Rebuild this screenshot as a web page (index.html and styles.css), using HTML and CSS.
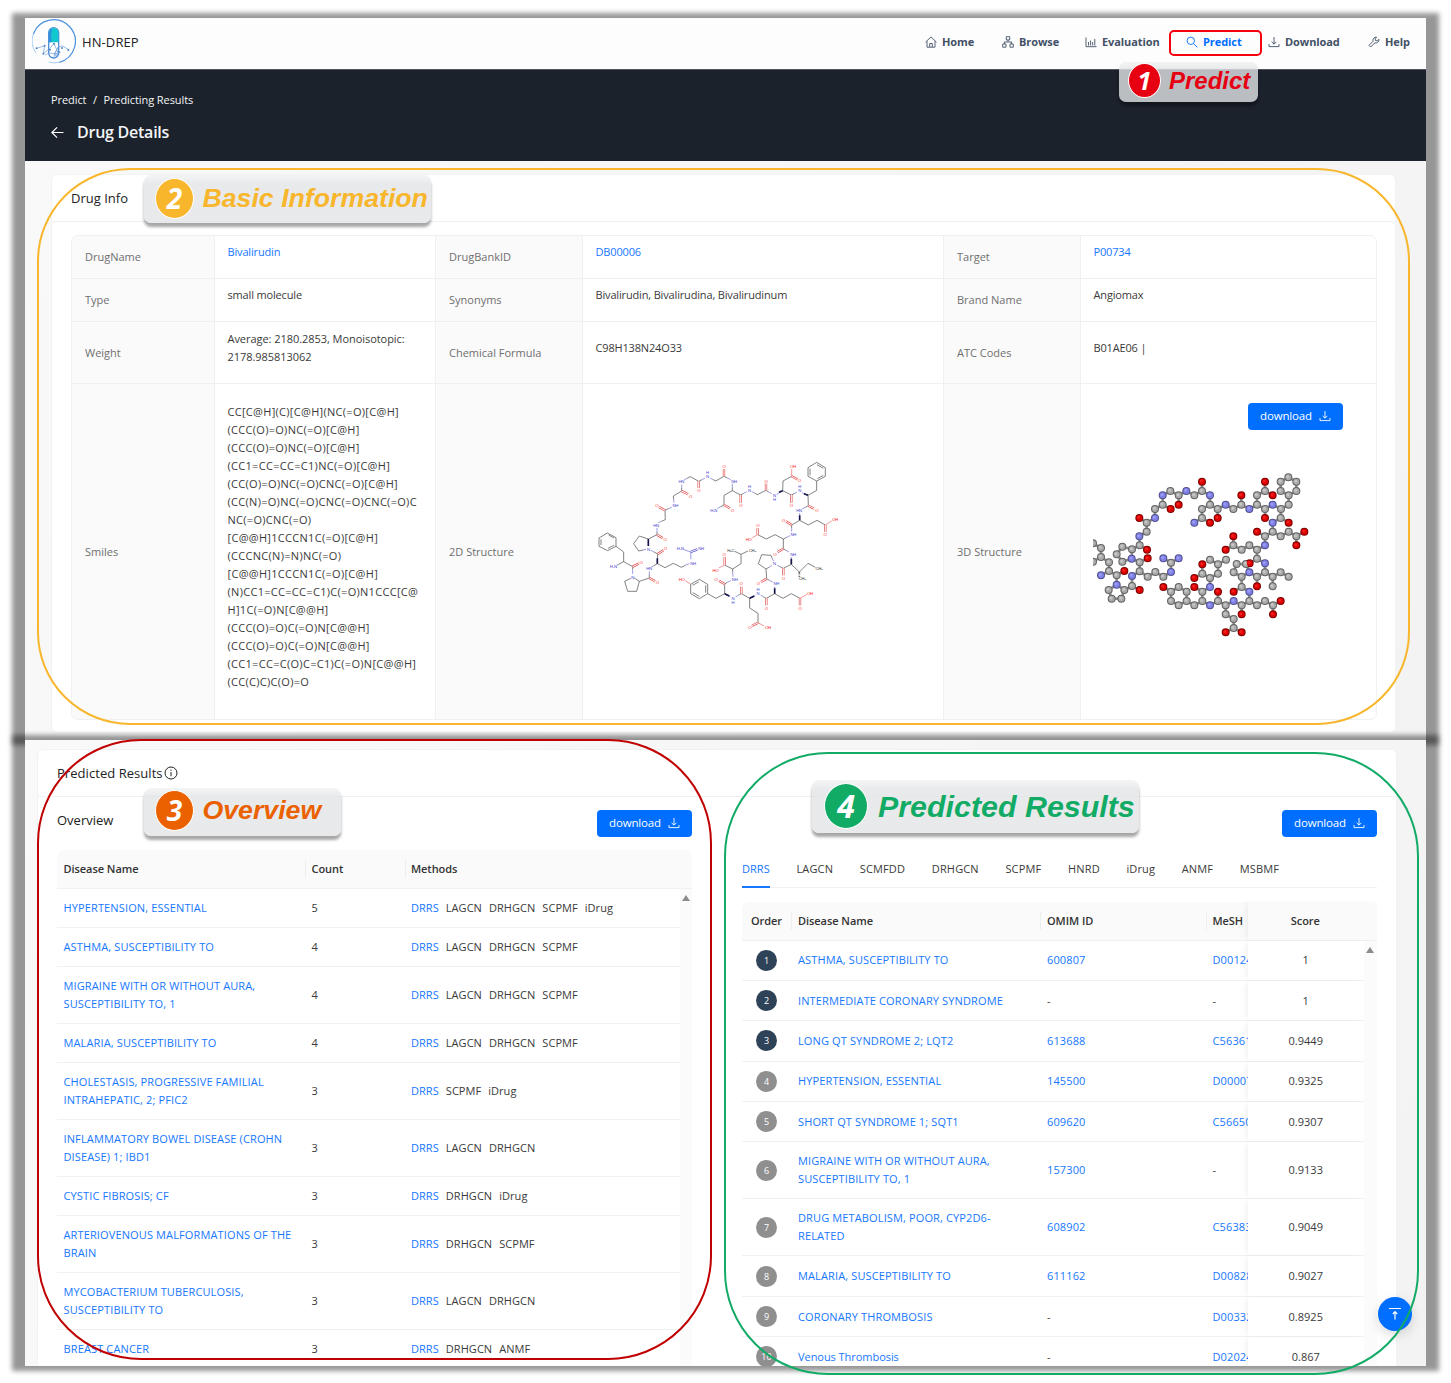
FILE: index.html
```html
<!DOCTYPE html>
<html lang="en">
<head>
<meta charset="utf-8">
<title>HN-DREP - Drug Details</title>
<link rel="stylesheet" href="styles.css">
</head>
<body>
<svg class="defs" width="0" height="0">
  <symbol id="i-download" viewBox="0 0 12 12"><path d="M6 1v7M3.600 5.800 6 8.200l2.400-2.400M1 8v2.600h10V8"/></symbol>
</svg>
<main class="figure">
  <section class="panel panel-top">
    <header class="topbar">
      <svg class="logo" viewBox="0 0 132 138">
        <path d="M4 48A65 65 0 1 1 82 133" fill="none" stroke="#4a90dc" stroke-width="3.500"/>
        <path d="M12 106A65 65 0 0 1 4 48M82 133A65 65 0 0 1 50 132" fill="none" stroke="#a9cdf3" stroke-width="3"/>
        <rect x="50" y="29" width="30" height="91" rx="15" fill="#fff" stroke="#4c8fd8" stroke-width="4"/>
        <path d="M51 73V44a14 14 0 0 1 28 0v29z" fill="#12c8cf"/>
        <path d="M51 73V44a14 14 0 0 1 10-13q-6 20-2 42z" fill="#2a94de"/>
        <path d="M14 91l24-8-4 24 18-14 14-16 14 32-28-4-12 6M80 109l-14 6 10-24 14-8 20 12M80 85l-14 24 20-6" fill="none" stroke="#6a9cd4" stroke-width="2"/>
        <path d="M14 91h0M38 83h0M34 107h0M66 77h0M90 90h0M109 96h0M80 101h0M54 95h0" class="dots"/>
      </svg>
      <span class="brand">HN-DREP</span>
      <nav class="nav">
        <a class="n1"><svg class="ic" viewBox="0 0 12 12"><path d="M.5 6.200 6 .9l5.500 5.300M2 5.200v6h8v-6M4.700 11V7.500h2.600V11"/></svg>Home</a>
        <a class="n2"><svg class="ic" viewBox="0 0 12 12"><path d="M4.300.7h3.400v3.200H4.300zM.7 8h3.300v3.200H.7zM8 8h3.300v3.200H8zM6 4v2M2.400 8V6h7.200v2"/></svg>Browse</a>
        <a class="n3"><svg class="ic" viewBox="0 0 12 12"><path d="M1 1.500v9.200h10.500M3.500 9.500V6M5.600 9.500V4.500M7.700 9.500V6M9.800 9.500V3"/></svg>Evaluation</a>
        <a class="n4 on"><svg class="ic" viewBox="0 0 12 12"><circle cx="4.800" cy="4.800" r="3.700"/><path d="m7.600 7.600 3.700 3.700"/></svg>Predict</a>
        <a class="n5"><svg class="ic"><use href="#i-download"/></svg>Download</a>
        <a class="n6"><svg class="ic" viewBox="0 0 12 12"><path d="M1 9.300 5 5.300C4.500 3 6.200.9 8.600 1.100L7.200 2.700l.3 1.800 1.800.3L11 3.300C11.200 5.700 9 7.500 6.700 7L2.700 11z"/></svg>Help</a>
      </nav>
    </header>
    <div class="hero">
      <div class="crumbs">Predict<i>/</i>Predicting Results</div>
      <h1><svg class="back" viewBox="0 0 12 12"><path d="M11.500 6H1M5.600 1.200.8 6l4.800 4.800"/></svg><span>Drug Details</span></h1>
    </div>
    <div class="card info">
      <h2>Drug Info</h2>
      <div class="desc">
        <div class="k">DrugName</div><div class="v link">Bivalirudin</div><div class="k">DrugBankID</div><div class="v link">DB00006</div><div class="k">Target</div><div class="v link">P00734</div>
        <div class="k">Type</div><div class="v">small molecule</div><div class="k">Synonyms</div><div class="v">Bivalirudin, Bivalirudina, Bivalirudinum</div><div class="k">Brand Name</div><div class="v">Angiomax</div>
        <div class="k">Weight</div><div class="v weight">Average: 2180.2853, Monoisotopic:<br>2178.985813062</div><div class="k">Chemical Formula</div><div class="v">C98H138N24O33</div><div class="k">ATC Codes</div><div class="v">B01AE06 |</div>
        <div class="k last">Smiles</div>
        <div class="v last smiles">CC[C@H](C)[C@H](NC(=O)[C@H]<br>(CCC(O)=O)NC(=O)[C@H]<br>(CCC(O)=O)NC(=O)[C@H]<br>(CC1=CC=CC=C1)NC(=O)[C@H]<br>(CC(O)=O)NC(=O)CNC(=O)[C@H]<br>(CC(N)=O)NC(=O)CNC(=O)CNC(=O)C<br>NC(=O)CNC(=O)<br>[C@@H]1CCCN1C(=O)[C@H]<br>(CCCNC(N)=N)NC(=O)<br>[C@@H]1CCCN1C(=O)[C@H]<br>(N)CC1=CC=CC=C1)C(=O)N1CCC[C@<br>H]1C(=O)N[C@@H]<br>(CCC(O)=O)C(=O)N[C@@H]<br>(CCC(O)=O)C(=O)N[C@@H]<br>(CC1=CC=C(O)C=C1)C(=O)N[C@@H]<br>(CC(C)C)C(O)=O</div>
        <div class="k last">2D Structure</div>
        <div class="v last">
          <svg class="mol2d" viewBox="18 0 765 579">
            <path class="b" d="M52 249 78 263V289L53 302 27 289V264ZM56 255 72 264M72 286 54 295M33 285V268M78 289 101 306V335L84 344M101 335 128 350V358M136 386 148 394 140 424H113L104 394 120 386M148 394 178 384V374M190 348 202 341 225 353 250 340 274 352 286 346M202 341 203 312 192 306M175 267 148 258 131 281 146 303 160 300M175 267 201 254V246M214 214 226 209 225 181 235 176M251 148 250 138 275 123V114M291 85 301 80 326 94 336 89M368 88 377 93 402 79 412 84M427 112V122L402 136V165L392 170M427 122 452 135 461 130M494 129 502 134 528 121 536 126M568 128 578 122 579 93 605 79M578 122 604 135 612 131M644 132 654 136 680 121V93L654 79V53L680 37 706 53V79L680 93M660 76V56M681 44 700 55M700 76 682 86M654 136 655 167 646 172M629 200V211L655 225 681 211 706 225M629 211 605 225V235M590 262 580 267 555 254 529 267 503 254M580 267V296L588 301M604 332V343L580 355 570 350M547 326 543 316 515 314 505 341 528 357 537 352M604 343 628 366 654 340 676 352M528 357 530 386 538 391M554 421V431L579 445 604 431 630 445M554 431 529 445 520 440M488 441 479 445 454 431 445 436M479 445V474L504 490V518M412 436 404 431 378 445 353 431V403L328 388 302 403V431L328 446 353 431M347 428V406M327 395 308 406M308 428 328 439M404 431V402L412 397M428 368V357L404 345M428 357 453 341V313L434 304M453 313 474 303"/>
            <path class="b dash" d="M628 366V382"/>
            <path class="n" d="M84 344 80 346M128 358V372M136 386 132 384M120 386 124 384M178 374V364M190 348 184 351M286 346 298 341M303 328 302 306 282 299M192 306 183 301M160 300 168 298M175 288V278M201 246V234M214 214 205 218M235 176 245 172M252 158 251 148M275 114V104M291 85 282 90M336 89 345 84M368 88 360 84M412 84 422 89M427 112V101M392 170 382 175M461 130 470 125M494 129 486 125M536 126 545 131M568 128 560 133M612 131 621 127M644 132 636 128M646 172 637 176M629 200V189M605 235V245M590 262 600 257M588 301 597 306M604 332V321M570 350 561 346M537 352 546 346M547 326 551 334M538 391 548 396M554 421V410M520 440 512 436M488 441 496 436M445 436 437 440M412 436 421 440M412 397 422 392M429 380 428 368"/>
            <path class="o" d="M605 79V57M706 225 725 213M503 254 487 263M630 445 650 434M504 518 522 528M302 403 286 392M404 345 386 354"/>
            <path class="dn" d="M302 306 322 298"/>
            <path class="do" d="M128 350 146 341M178 384 195 394M203 312 220 301M201 254 218 264M225 181 207 171M275 123 294 133M326 94V113M402 79V57M402 165 420 175M452 135V158M528 121V101M605 79 622 88M604 135V158M655 167 672 176M706 225V245M605 225 588 214M503 254V235M580 296 563 306M580 355V376M530 386 513 396M630 445V466M529 445V466M454 431V410M504 518 486 528M404 402 387 392M404 345V322"/>
            <path class="gap" d="M302 306 322 298M128 350 146 341M178 384 195 394M203 312 220 301M201 254 218 264M225 181 207 171M275 123 294 133M326 94V113M402 79V57M402 165 420 175M452 135V158M528 121V101M605 79 622 88M604 135V158M655 167 672 176M706 225V245M605 225 588 214M503 254V235M580 296 563 306M580 355V376M530 386 513 396M630 445V466M529 445V466M454 431V410M504 518 486 528M404 402 387 392M404 345V322"/>
            <path class="w" d="M175 267V288M202 341V325M578 122 567 127M654 136 642 131M629 211V196M604 343V326M554 431V415M404 431 418 438M479 445 493 438"/>
            <g class="tn"><text x="70" y="354">H₂N</text><text x="128" y="386">N</text><text x="177" y="360">HN</text><text x="309" y="344">NH</text><text x="271" y="301">H₂N</text><text x="333" y="301">NH</text><text x="175" y="302">N</text><text x="198" y="230">HN</text><text x="256" y="172">NH</text><text x="274" y="99">HN</text><text x="352" y="84">N</text><text x="352" y="71">H</text><text x="432" y="99">NH</text><text x="371" y="186">H₂N</text><text x="478" y="127">N</text><text x="478" y="115">H</text><text x="553" y="142">N</text><text x="553" y="154">H</text><text x="629" y="127">N</text><text x="629" y="115">H</text><text x="627" y="186">HN</text><text x="610" y="259">NH</text><text x="609" y="317">NH</text><text x="553" y="346">N</text><text x="559" y="406">NH</text><text x="504" y="436">N</text><text x="504" y="424">H</text><text x="429" y="450">N</text><text x="429" y="462">H</text><text x="434" y="392">NH</text></g>
            <g class="to"><text x="153" y="343">O</text><text x="202" y="402">O</text><text x="226" y="301">O</text><text x="225" y="273">O</text><text x="200" y="172">O</text><text x="301" y="143">O</text><text x="326" y="127">O</text><text x="402" y="53">O</text><text x="427" y="186">O</text><text x="452" y="172">O</text><text x="528" y="99">O</text><text x="609" y="53">OH</text><text x="628" y="97">O</text><text x="604" y="172">O</text><text x="680" y="186">O</text><text x="735" y="214">OH</text><text x="705" y="259">O</text><text x="580" y="215">O</text><text x="503" y="230">O</text><text x="476" y="273">HO</text><text x="554" y="317">O</text><text x="580" y="391">O</text><text x="505" y="406">O</text><text x="660" y="436">OH</text><text x="630" y="480">O</text><text x="529" y="480">O</text><text x="453" y="406">O</text><text x="479" y="538">O</text><text x="534" y="538">OH</text><text x="275" y="393">HO</text><text x="378" y="393">O</text><text x="402" y="319">O</text><text x="376" y="365">HO</text></g>
            <g class="tc"><text x="422" y="305">H₃C</text><text x="487" y="305">CH₃</text><text x="687" y="359">CH₃</text><text x="637" y="391">CH₃</text></g>
          </svg>
        </div>
        <div class="k last">3D Structure</div>
        <div class="v last three">
          <div class="btn">download<svg><use href="#i-download"/></svg></div>
          <svg class="mol3d" viewBox="39 240 660 504">
            <path class="sticks" d="M39 457 63 471V498L39 512M63 498 87 514V540L63 553M87 540 110 553 133 540M110 553V581L86 597 95 623H124L133 597 110 581M133 597 156 585 179 597M156 585V555L179 541 203 557 226 543 250 557 273 543V515L250 502M273 515 296 502M179 541V514L203 502M179 514 155 503 127 512 110 490 127 467 156 475 155 503M156 475 179 463 201 476M179 463 178 436 200 422V395L178 381M200 395 225 381V354L248 341 272 354M248 341V313L271 300 296 313V341M296 313 319 300 343 313 366 300V272M366 300 390 313V341L366 354V381L343 395M366 381 390 395M390 341 413 354V381M413 354 437 341 460 354 484 341V313M484 341 508 354 531 341V313L555 300V272M555 300 578 313M531 341 555 354V381M555 354 578 341 603 354 626 341V313L602 300V272L625 259 649 272V300L626 313M603 354 602 381 626 395M602 381 578 395V422L602 436 626 422 649 436 673 422M649 436V463M578 422 555 436 531 422M555 436V463L531 476 508 463 485 476 460 463V436M460 463 437 476M531 476V503L509 517M531 503 555 517V544L578 557 602 544 626 557M578 557V586M555 544 531 557V586M531 557 508 544 485 557 461 544 470 519H498L508 544M485 557V588L461 602M485 588 508 602V630L531 643 555 630 579 643 602 630M579 643V670M508 630 485 643V670M485 643 461 630 437 643V670L461 684V711L437 724M461 711 485 724M437 643 414 630V602M414 630 390 643 367 630 343 643 320 630V602L296 588 273 602 250 588M273 602V630L296 643 320 630M367 630V602L343 588M367 602 390 588V561L367 548V520M367 548 343 561M390 561 414 548V520L390 506M414 520 438 506"/>
            <defs>
              <path id="ac" d="M39 457h0M63 471h0M63 498h0M39 512h0M87 514h0M87 540h0M110 553h0M86 597h0M95 623h0M124 623h0M133 597h0M156 585h0M179 541h0M203 557h0M226 543h0M250 557h0M273 515h0M179 514h0M127 512h0M110 490h0M127 467h0M156 475h0M179 463h0M200 422h0M200 395h0M225 354h0M248 341h0M271 300h0M296 313h0M343 313h0M366 300h0M390 341h0M366 354h0M366 381h0M413 354h0M460 354h0M484 341h0M531 341h0M531 313h0M555 300h0M555 354h0M603 354h0M626 341h0M626 313h0M602 300h0M602 272h0M625 259h0M649 272h0M649 300h0M602 381h0M578 422h0M602 436h0M626 422h0M649 436h0M555 436h0M531 476h0M508 463h0M485 476h0M460 463h0M531 503h0M555 544h0M578 557h0M602 544h0M626 557h0M578 586h0M531 557h0M485 557h0M461 544h0M470 519h0M498 519h0M485 588h0M508 630h0M531 643h0M555 630h0M579 643h0M485 643h0M437 643h0M437 670h0M461 684h0M461 711h0M414 630h0M367 630h0M343 643h0M320 630h0M320 602h0M296 588h0M273 602h0M273 630h0M296 643h0M367 602h0M390 561h0M367 548h0M414 548h0M414 520h0M390 506h0M438 506h0"/>
              <path id="an" d="M63 553h0M110 581h0M156 555h0M273 543h0M250 502h0M296 502h0M155 503h0M178 436h0M225 381h0M248 313h0M319 300h0M390 313h0M343 395h0M437 341h0M508 354h0M578 341h0M578 395h0M555 463h0M555 517h0M508 544h0M508 602h0M461 630h0M390 643h0M390 588h0"/>
              <path id="ao" d="M133 540h0M179 597h0M203 502h0M201 476h0M178 381h0M272 354h0M296 341h0M366 272h0M390 395h0M413 381h0M484 313h0M555 272h0M578 313h0M555 381h0M626 395h0M673 422h0M649 463h0M531 422h0M460 436h0M437 476h0M509 517h0M531 586h0M461 602h0M602 630h0M579 670h0M485 670h0M437 724h0M485 724h0M414 602h0M250 588h0M343 588h0M367 520h0M343 561h0"/>
            </defs>
            <g class="rim"><use href="#ac" stroke="#626262"/><use href="#ao" stroke="#7c0000"/><use href="#an" stroke="#505090"/></g>
            <g class="ball"><use href="#ac" stroke="#a9a9a9"/><use href="#ao" stroke="#dc0000"/><use href="#an" stroke="#8080e4"/></g>
            <g class="shine"><use href="#ac" stroke="#c6c6c6"/><use href="#ao" stroke="#f02020"/><use href="#an" stroke="#9a9af8"/></g>
          </svg>
        </div>
      </div>
    </div>
  </section>

  <section class="panel panel-bottom">
    <div class="card results">
      <h2>Predicted Results <svg class="info-ic" viewBox="0 0 14 14"><circle cx="7" cy="7" r="6"/><path d="M7 6v4.200M7 3.600v1.200"/></svg></h2>
      <div class="cols">
        <div class="overview">
          <div class="bar"><h3>Overview</h3><div class="btn">download<svg><use href="#i-download"/></svg></div></div>
          <div class="tbl">
            <div class="row head"><span>Disease Name</span><span>Count</span><span>Methods</span></div>
            <div class="body">
              <div class="row"><span class="link">HYPERTENSION, ESSENTIAL</span><span>5</span><span class="m"><b>DRRS</b><i>LAGCN</i><i>DRHGCN</i><i>SCPMF</i><i>iDrug</i></span></div>
              <div class="row"><span class="link">ASTHMA, SUSCEPTIBILITY TO</span><span>4</span><span class="m"><b>DRRS</b><i>LAGCN</i><i>DRHGCN</i><i>SCPMF</i></span></div>
              <div class="row two"><span class="link">MIGRAINE WITH OR WITHOUT AURA,<br>SUSCEPTIBILITY TO, 1</span><span>4</span><span class="m"><b>DRRS</b><i>LAGCN</i><i>DRHGCN</i><i>SCPMF</i></span></div>
              <div class="row"><span class="link">MALARIA, SUSCEPTIBILITY TO</span><span>4</span><span class="m"><b>DRRS</b><i>LAGCN</i><i>DRHGCN</i><i>SCPMF</i></span></div>
              <div class="row two"><span class="link">CHOLESTASIS, PROGRESSIVE FAMILIAL<br>INTRAHEPATIC, 2; PFIC2</span><span>3</span><span class="m"><b>DRRS</b><i>SCPMF</i><i>iDrug</i></span></div>
              <div class="row two"><span class="link">INFLAMMATORY BOWEL DISEASE (CROHN<br>DISEASE) 1; IBD1</span><span>3</span><span class="m"><b>DRRS</b><i>LAGCN</i><i>DRHGCN</i></span></div>
              <div class="row"><span class="link">CYSTIC FIBROSIS; CF</span><span>3</span><span class="m"><b>DRRS</b><i>DRHGCN</i><i>iDrug</i></span></div>
              <div class="row two"><span class="link">ARTERIOVENOUS MALFORMATIONS OF THE<br>BRAIN</span><span>3</span><span class="m"><b>DRRS</b><i>DRHGCN</i><i>SCPMF</i></span></div>
              <div class="row two"><span class="link">MYCOBACTERIUM TUBERCULOSIS,<br>SUSCEPTIBILITY TO</span><span>3</span><span class="m"><b>DRRS</b><i>LAGCN</i><i>DRHGCN</i></span></div>
              <div class="row"><span class="link">BREAST CANCER</span><span>3</span><span class="m"><b>DRRS</b><i>DRHGCN</i><i>ANMF</i></span></div>
            </div>
          </div>
        </div>
        <div class="predicted">
          <div class="bar end"><div class="btn">download<svg><use href="#i-download"/></svg></div></div>
          <div class="tabs"><span class="on">DRRS</span><span>LAGCN</span><span>SCMFDD</span><span>DRHGCN</span><span>SCPMF</span><span>HNRD</span><span>iDrug</span><span>ANMF</span><span>MSBMF</span></div>
          <div class="tbl">
            <div class="row head"><span class="c">Order</span><span>Disease Name</span><span>OMIM ID</span><span class="mesh">MeSH</span><span class="score">Score</span></div>
            <div class="body">
              <div class="row"><span class="c"><em class="top">1</em></span><span class="link">ASTHMA, SUSCEPTIBILITY TO</span><span class="link">600807</span><span class="mesh link">D001249</span><span class="score">1</span></div>
              <div class="row"><span class="c"><em class="top">2</em></span><span class="link">INTERMEDIATE CORONARY SYNDROME</span><span>-</span><span class="mesh">-</span><span class="score">1</span></div>
              <div class="row"><span class="c"><em class="top">3</em></span><span class="link">LONG QT SYNDROME 2; LQT2</span><span class="link">613688</span><span class="mesh link">C563614</span><span class="score">0.9449</span></div>
              <div class="row"><span class="c"><em>4</em></span><span class="link">HYPERTENSION, ESSENTIAL</span><span class="link">145500</span><span class="mesh link">D000075</span><span class="score">0.9325</span></div>
              <div class="row"><span class="c"><em>5</em></span><span class="link">SHORT QT SYNDROME 1; SQT1</span><span class="link">609620</span><span class="mesh link">C566506</span><span class="score">0.9307</span></div>
              <div class="row two"><span class="c"><em>6</em></span><span class="link">MIGRAINE WITH OR WITHOUT AURA,<br>SUSCEPTIBILITY TO, 1</span><span class="link">157300</span><span class="mesh">-</span><span class="score">0.9133</span></div>
              <div class="row two"><span class="c"><em>7</em></span><span class="link">DRUG METABOLISM, POOR, CYP2D6-<br>RELATED</span><span class="link">608902</span><span class="mesh link">C563835</span><span class="score">0.9049</span></div>
              <div class="row"><span class="c"><em>8</em></span><span class="link">MALARIA, SUSCEPTIBILITY TO</span><span class="link">611162</span><span class="mesh link">D008288</span><span class="score">0.9027</span></div>
              <div class="row"><span class="c"><em>9</em></span><span class="link">CORONARY THROMBOSIS</span><span>-</span><span class="mesh link">D003328</span><span class="score">0.8925</span></div>
              <div class="row"><span class="c"><em>10</em></span><span class="link mixed">Venous Thrombosis</span><span>-</span><span class="mesh link">D020246</span><span class="score">0.867</span></div>
            </div>
          </div>
        </div>
      </div>
    </div>
    <div class="totop"><svg viewBox="0 0 14 14"><path d="M1 1.500h12M7 12.500V5M4.800 7 7 4.600 9.200 7"/></svg></div>
  </section>

  <div class="frame f-nav"></div>
  <div class="frame f-info"></div>
  <div class="frame f-overview"></div>
  <div class="frame f-pred"></div>
  <div class="tag t1"><b>1</b><span>Predict</span></div>
  <div class="tag t2"><b>2</b><span>Basic Information</span></div>
  <div class="tag t3"><b>3</b><span>Overview</span></div>
  <div class="tag t4"><b>4</b><span>Predicted Results</span></div>
</main>
</body>
</html>
```
FILE: styles.css
```css
* { box-sizing: border-box; }
body { margin: 0; background: #fff; font: 11px/18px "Open Sans", "Noto Sans", sans-serif; color: #3a3a3a; }
.defs { position: absolute; }
.figure { position: relative; width: 1451px; height: 1383px; padding: 18px 25px 0; overflow: hidden; }
i { font-style: normal; }
h1, h2, h3 { margin: 0; }
svg { flex: none; }

.panel { position: relative; isolation: isolate; }
.panel::before { content: ""; position: absolute; z-index: -1; inset: -5px -13px; background: rgba(0, 0, 0, .41); filter: blur(2.500px); }
.panel::after { content: ""; position: absolute; z-index: -1; inset: 0; background: linear-gradient(115deg, #f9f9f9, #f3f3f3); }
.panel-top { height: 722px; }
.panel-bottom { height: 626px; padding: 9px 30px 0 12px; }

.topbar { height: 52px; background: #fdfdfd; border-bottom: 1px solid #50565f; display: flex; align-items: center; padding-left: 7px; }
.logo { width: 44px; height: 46px; margin-top: -5px; }
.dots { stroke: #4b86c8; stroke-width: 6; stroke-linecap: round; }
.brand { margin-left: 6px; font-size: 13px; color: #222; font-weight: 500; letter-spacing: .1px; margin-top: -4px; }
.nav { margin-left: auto; display: flex; color: #435066; font-weight: 700; margin-top: -4px; letter-spacing: -.08px; }
.nav a { display: flex; align-items: center; gap: 5px; }
.nav .on { color: #006eff; }
.ic { width: 12px; height: 12px; fill: none; stroke: currentColor; stroke-width: .900; }
.n1 { width: 77px; } .n2 { width: 83px; } .n3 { width: 101px; } .n4 { width: 82px; } .n5 { width: 100px; } .n6 { width: 58px; }

.hero { height: 91px; background: #1b222c; color: #f4f5f6; padding: 21px 26px 0; }
.crumbs { letter-spacing: -.08px; }
.crumbs i { margin: 0 6.500px; }
h1 { display: flex; align-items: center; font-size: 16px; font-weight: 600; line-height: 24px; margin-top: 11px; letter-spacing: -.25px; }
.back { width: 13px; height: 13px; fill: none; stroke: #fff; stroke-width: 1.100; margin-right: 13px; }

.card { background: #fff; border: 1px solid #f2f2f2; border-radius: 6px; }
h2 { font-size: 13px; font-weight: 500; color: #222; line-height: 46px; border-bottom: 1px solid #f1f1f1; padding-left: 19px; height: 47px; letter-spacing: 0; }
.info { width: 1345px; height: 559px; margin: 13px 0 0 26px; }
.desc { margin: 13px 0 0 19px; width: 1306px; border: 1px solid #f0f0f0; border-radius: 7px; display: grid; grid-template-columns: 143px 221px 147px 361px 137px 295px; grid-template-rows: 43px 43px 62px 335px; overflow: hidden; }
.k, .v { display: flex; align-items: center; padding-left: 13px; border-right: 1px solid #f0f0f0; border-bottom: 1px solid #f0f0f0; }
.k { background: #fafafa; color: #6f6f6f; }
.v { padding-bottom: 10px; letter-spacing: -.16px; padding-left: 12.500px; }
.weight { letter-spacing: -.05px; }
.smiles { letter-spacing: .3px; }
.v:nth-child(6n) { border-right: 0; }
.last { border-bottom: 0; }
.link { color: #1677ff; }
.mol2d { width: 255px; height: 193px; }
.mol2d path { fill: none; stroke-width: 2; }
.mol2d .b { stroke: #444; }
.mol2d .dash { stroke-width: 5; stroke-dasharray: 2 2; }
.mol2d .n { stroke: #6a6ad8; }
.mol2d .o { stroke: #f06060; }
.mol2d .do { stroke: #e05050; stroke-width: 7; }
.mol2d .dn { stroke: #4a4ac8; stroke-width: 7; }
.mol2d .gap { stroke: #fff; stroke-width: 3; }
.mol2d .w { stroke: #15154a; stroke-width: 5; }
.mol2d text { font: 13px "Liberation Sans", sans-serif; text-anchor: middle; letter-spacing: -1px; }
.tn { fill: #4a4ad0; } .to { fill: #f22; } .tc { fill: #333; }
.three { flex-direction: column; align-items: flex-start; padding: 19px 0 0 12px; }
.three .btn { align-self: flex-end; margin-right: 33px; }
.mol3d { width: 220px; height: 168px; margin-top: 41px; }
.mol3d path { stroke-linecap: round; fill: none; }
.sticks { stroke: #8c8c8c; stroke-width: 8; }
.rim { stroke-width: 24; } .ball { stroke-width: 18; } .shine { stroke-width: 9; transform: translate(-2px, -2px); }

.btn { width: 95px; height: 26.500px; border-radius: 4px; background: #006eff; color: #fff; font-size: 11.500px; letter-spacing: -.15px; display: flex; align-items: center; justify-content: center; gap: 7px; }
.btn svg { width: 12px; height: 12px; fill: none; stroke: #fff; stroke-width: .900; }

.results { width: 1360px; height: 617px; border-bottom: 0; border-radius: 6px 6px 0 0; overflow: hidden; }
.info-ic { width: 14px; height: 14px; fill: none; stroke: #222; vertical-align: -2px; margin-left: -2px; }
.results h2 { letter-spacing: .05px; }
.cols { display: flex; gap: 50px; padding: 0 19px; }
.overview { width: 635px; } .predicted { width: 635px; }
.bar { display: flex; height: 53px; justify-content: space-between; padding-top: 13px; }
.end { justify-content: flex-end; }
h3 { font-size: 13px; font-weight: 500; color: #222; line-height: 20px; letter-spacing: 0; }
.row { display: grid; align-items: center; height: 39px; border-bottom: 1px solid #f1f1f1; }
.overview .row { grid-template-columns: 248px 99.500px 1fr; }
.overview .row > span { padding-left: 6.500px; }
.row .link { letter-spacing: .13px; }
.row .mixed { letter-spacing: -.05px; }
.overview .body { border-right: 12px solid #fbfbfb; }
.row.two { height: 57px; }
.head.row { background: #fafafa; font-weight: 600; color: #333; border-radius: 7px 7px 0 0; letter-spacing: -.05px; }
.head span { position: relative; }
.head span + span::before { content: ""; position: absolute; left: 0; top: 0; height: 18px; border-left: 1px solid #eee; }
.m { display: flex; gap: 7px; letter-spacing: .05px; }
.m b { color: #1677ff; font-weight: 400; }
.body { position: relative; }
.body::after { content: ""; position: absolute; right: -10px; top: 6px; border: 4px solid transparent; border-top: 0; border-bottom: 6px solid #8c8c8c; }
.tabs { display: flex; gap: 26.600px; height: 38px; border-bottom: 1px solid #f1f1f1; margin-bottom: 14px; line-height: 38px; letter-spacing: .16px; }
.tabs .on { color: #1677ff; border-bottom: 2px solid #1677ff; height: 38px; letter-spacing: .05px; }
.predicted .row { grid-template-columns: 49px 249px 165.500px 42px 1fr; height: 40.400px; }
.predicted .row.two { height: 57px; }
.predicted .row.head { height: 38.500px; }
.predicted .row > span { padding-left: 7px; }
.predicted .row > .c { padding: 0; text-align: center; }
.predicted .body { border-right: 13px solid #fbfbfb; }
.mesh { overflow: hidden; }
.predicted .row > .score { align-self: stretch; display: flex; align-items: center; justify-content: center; padding: 0; box-shadow: -4px 0 6px -2px rgba(0, 0, 0, .06); background: #fff; }
.predicted .row.head > .score { background: #fafafa; padding-right: 14px; }
.head .score::before { display: none; }
em { display: inline-block; width: 21px; height: 21px; border-radius: 50%; background: #8f8f8f; color: #fff; font: 9px/21px "Open Sans", sans-serif; text-align: center; vertical-align: middle; }
em.top { background: #2f4358; }
.totop { position: absolute; right: 14px; bottom: 35px; width: 34px; height: 34px; border-radius: 50%; background: #006eff; display: grid; place-items: center; box-shadow: 0 4px 12px rgba(0, 0, 0, .15); }
.totop svg { width: 14px; height: 14px; fill: none; stroke: #fff; stroke-width: 1.200; }

.frame { position: absolute; border: 2px solid; }
.f-nav { left: 1169px; top: 30px; width: 93px; height: 26px; border-color: #f5000d; border-radius: 5px; }
.f-info { left: 37px; top: 168px; width: 1373px; height: 557px; border-color: #f8b62d; border-radius: 93px; }
.f-overview { left: 37px; top: 739px; width: 675px; height: 621px; border-color: #c00000; border-radius: 104px; }
.f-pred { left: 724px; top: 752px; width: 695px; height: 623px; border-color: #12ab66; border-radius: 104px; }
.tag { position: absolute; display: flex; align-items: center; border-radius: 7px; background: linear-gradient(rgba(222, 228, 228, .35), rgba(226, 228, 230, .8) 18%, rgba(226, 228, 230, .8)); box-shadow: 0 4px 3px rgba(0, 0, 0, .35); font: italic 700 26.700px/30px "Liberation Sans", sans-serif; white-space: nowrap; }
.tag b { border-radius: 50%; border: 1px solid #fff; color: #fff; text-align: center; font: italic 700 28px/38px "Open Sans", sans-serif; }
.t1 { left: 1119px; top: 62px; width: 139px; height: 40px; color: #e60012; font-size: 24px; padding: 0 0 3px 9px; }
.t1 b { width: 33px; height: 35px; background: #e60012; margin-right: 8px; font-size: 25px; line-height: 33px; }
.t2 { left: 144px; top: 175px; width: 287px; height: 48px; color: #f8b62d; padding: 0 0 2px 11px; }
.t2 b, .t3 b { width: 39px; height: 41px; margin-right: 8.500px; }
.t2 b { background: #f8b62d; }
.t3 { left: 144px; top: 788px; width: 197px; height: 48px; color: #eb6100; padding: 0 0 4px 11px; }
.t3 b { background: #eb6100; }
.t4 { left: 812px; top: 780px; width: 327px; height: 53px; color: #12ab66; font-size: 30.400px; padding: 0 0 2px 12px; }
.t4 b { width: 44px; height: 46px; background: #12ab66; margin-right: 10px; font-size: 32px; line-height: 44px; }
```
